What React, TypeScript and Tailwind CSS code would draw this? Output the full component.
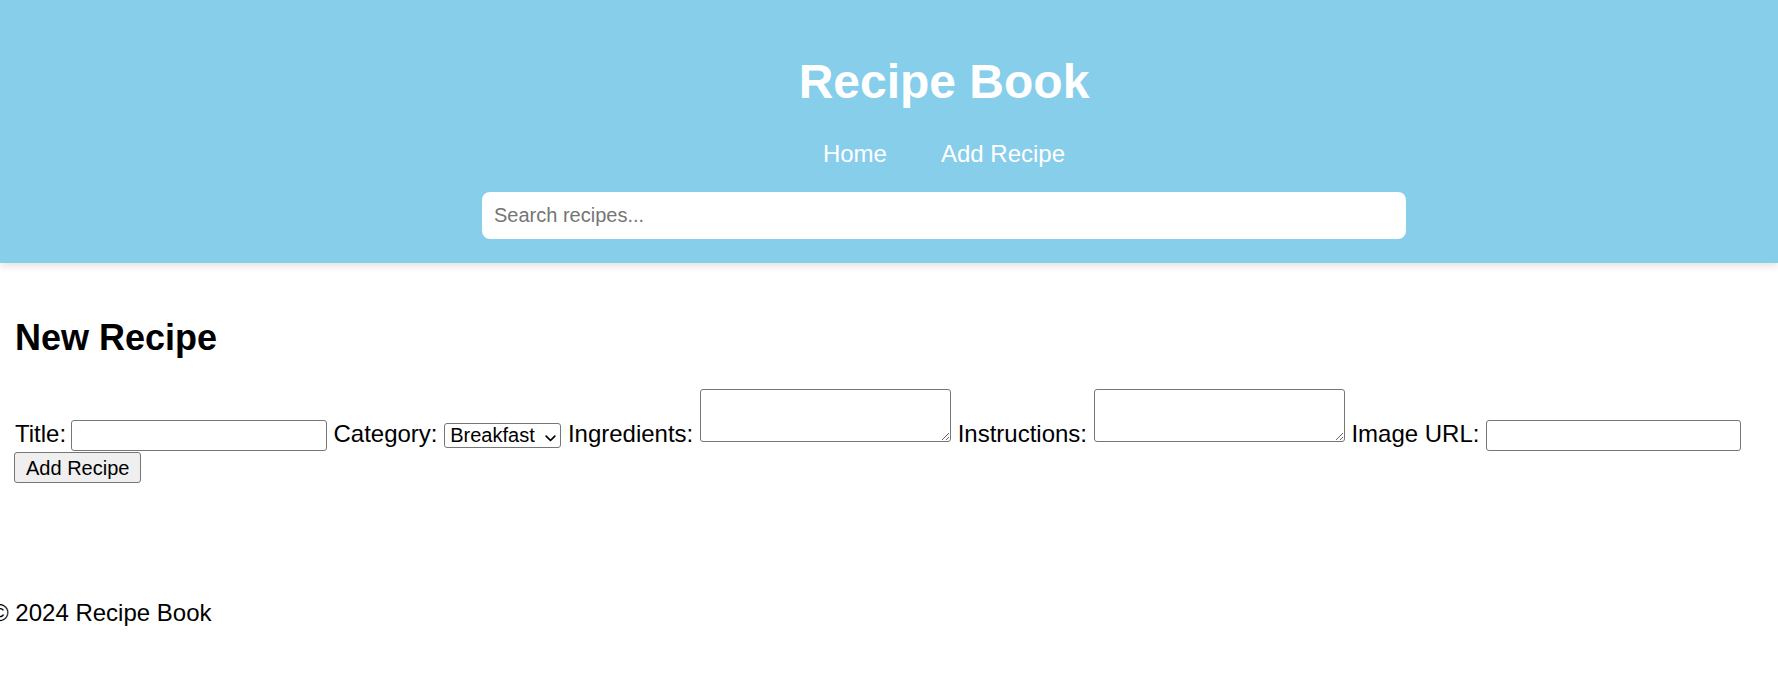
import { useState } from 'react';

// Recipe Book — "new recipe" page. Everything is laid out at 1.5x of a 16px base,
// which is what the browser showed (24px body text, 48px title).

const categories = ['Breakfast', 'Lunch', 'Dinner', 'Dessert'];

export default function App() {
    const [query, setQuery] = useState('');

    return (
        <div className="min-h-screen bg-white font-['Liberation_Sans',Arial,sans-serif] text-[24px] text-black">
            <header className="bg-[#87ceeb] pt-[54px] pb-[24px] pl-[110px] text-white shadow-[0_3px_8px_rgba(0,0,0,0.12)]">
                <h1 className="text-center text-[48px] leading-[55px] font-bold">Recipe Book</h1>

                <nav className="mt-[31px] flex justify-center gap-[54px] leading-[28px]">
                    <a href="#">Home</a>
                    <a href="#">Add Recipe</a>
                </nav>

                <div className="mt-[24px] flex justify-center">
                    <input
                        value={query}
                        onChange={(e) => setQuery(e.target.value)}
                        placeholder="Search recipes..."
                        className="h-[47px] w-[924px] rounded-[8px] bg-white px-[12px] text-[20px] text-black outline-none placeholder:text-[#757575]"
                    />
                </div>
            </header>

            <main className="px-[15px] pt-[54px]">
                <h2 className="mb-[31px] text-[36px] leading-[41px] font-bold">New Recipe</h2>

                <form onSubmit={(e) => e.preventDefault()}>
                    <label>Title:</label>{' '}
                    <input className="-ml-[2px] h-[31px] w-[256px] rounded-[3px] border border-[#767676] bg-white px-[3px] text-[20px]" />{' '}
                    <label>Category:</label>{' '}
                    <span className="relative inline-block">
                        <select
                            defaultValue="Breakfast"
                            className="h-[25px] w-[117px] appearance-none rounded-[3px] border border-[#767676] bg-white pr-[22px] pl-[5px] text-[20px] leading-[23px]"
                        >
                            {categories.map((c) => (
                                <option key={c}>{c}</option>
                            ))}
                        </select>
                        {/* native chevron, drawn since appearance is reset */}
                        <svg
                            viewBox="0 0 11 7"
                            className="pointer-events-none absolute right-[5px] bottom-[10px] h-[7px] w-[11px]"
                            fill="none"
                            stroke="#000"
                            strokeWidth="1.7"
                            strokeLinecap="round"
                            strokeLinejoin="round"
                        >
                            <path d="M1.2 1.2 5.5 5.5l4.3-4.3" />
                        </svg>
                    </span>{' '}
                    <label>Ingredients:</label>{' '}
                    <textarea className="h-[53px] w-[251px] rounded-[3px] border border-[#767676] bg-white align-baseline text-[20px]" />{' '}
                    <label>Instructions:</label>{' '}
                    <textarea className="h-[53px] w-[251px] rounded-[3px] border border-[#767676] bg-white align-baseline text-[20px]" />{' '}
                    <label>Image URL:</label>{' '}
                    <input className="h-[31px] w-[255px] rounded-[3px] border border-[#767676] bg-white px-[3px] text-[20px]" />{' '}
                    <button
                        type="submit"
                        className="-ml-[1px] h-[31px] rounded-[3px] border border-[#767676] bg-[#efefef] px-[11px] align-top text-[20px]"
                    >
                        Add Recipe
                    </button>
                </form>
            </main>

            <footer className="mt-[107px] -ml-[9px]">© 2024 Recipe Book</footer>
        </div>
    );
}
